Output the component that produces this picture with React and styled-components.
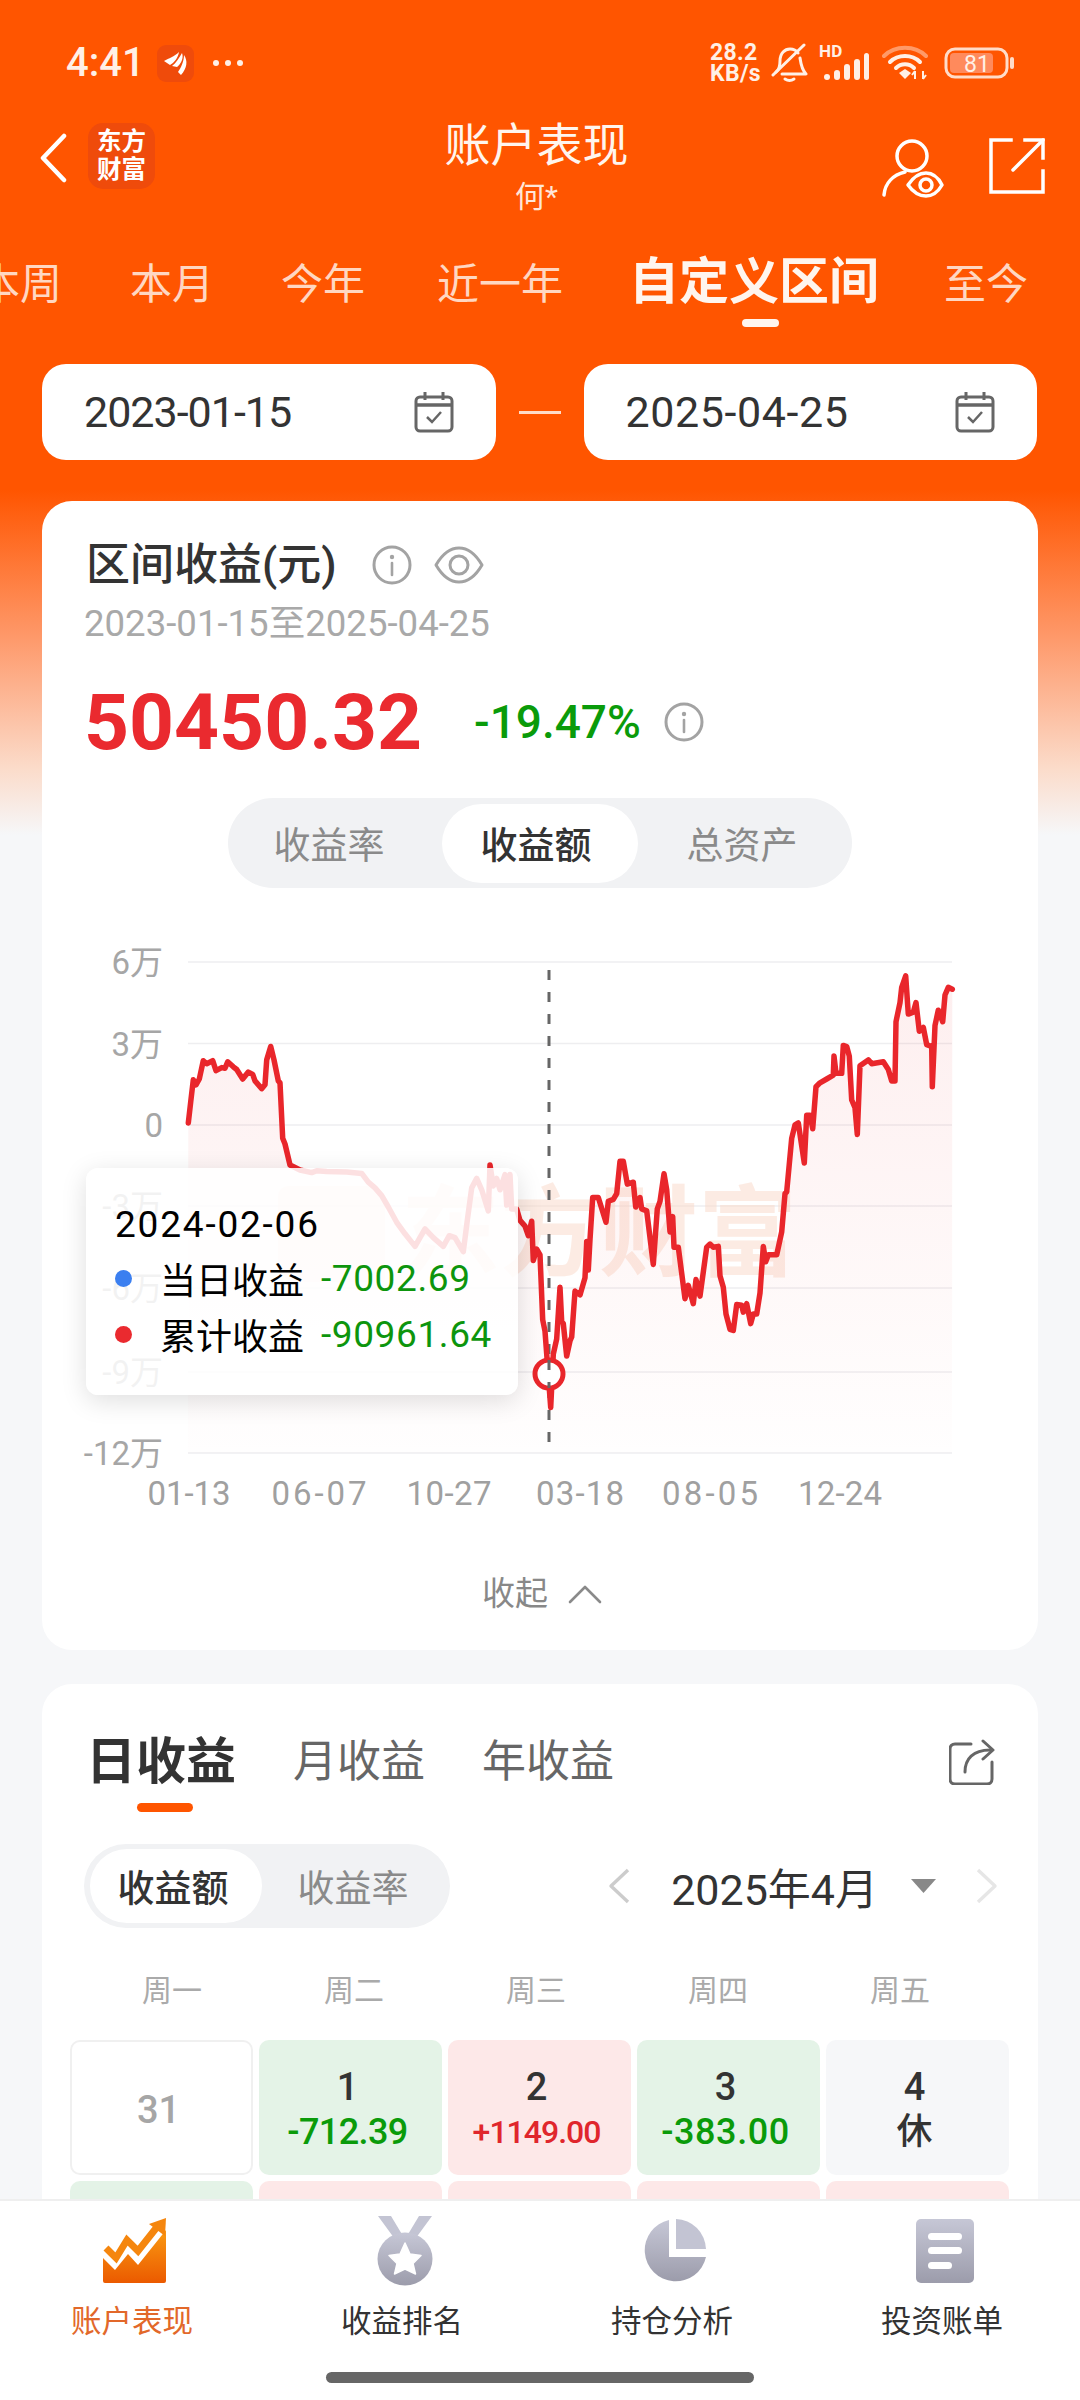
import React from 'react';
import styled, { createGlobalStyle } from 'styled-components';

const FONT = `Roboto, "Noto Sans CJK SC", sans-serif`;
const Global = createGlobalStyle`
  html, body { margin: 0; padding: 0; background: #f6f7f9; }
  body { font-family: ${FONT}; }
  * { box-sizing: border-box; }
`;

const Page = styled.div`
  width: 1080px; height: 2400px; overflow: hidden; display: flex; flex-direction: column;
  background: linear-gradient(180deg, #ff5500 0, #ff5500 490px, #fe9a6c 640px, #fbdccb 770px, #f6f7f9 835px, #f6f7f9 100%);
`;
const Scroll = styled.main`flex: 1; min-height: 0; overflow: hidden;`;

const StatusBar = styled.div`
  height: 110px; padding: 44px 65px 0 66px; display: flex; justify-content: space-between; align-items: flex-start; color: #fff0e6;
`;
const StatusLeft = styled.div`display: flex; align-items: center; height: 38px;`;
const Time = styled.span`font-size: 40px; font-weight: 500; line-height: 38px; width: 91px;`;
const StatusRight = styled.div`display: flex; align-items: center; height: 38px;`;
const Speed = styled.div`
  font-size: 23px; font-weight: 700; line-height: 21px; width: 61px; text-align: left; letter-spacing: .3px;
`;
const Hd = styled.div`position: relative; width: 50px; height: 38px; margin: 0 13px 0 11px;`;
const HdText = styled.span`
  position: absolute; left: 0; top: -2px; font-size: 17px; font-weight: 700; line-height: 18px; letter-spacing: .3px;
`;

const Nav = styled.div`
  display: grid; grid-template-columns: 405px 183px 1fr; padding-left: 40px; height: 104px; color: #fff;
`;
const NavLeft = styled.div`display: flex; align-items: flex-start; padding-top: 23px; gap: 21px;`;
const LogoBadge = styled.div`
  width: 67px; height: 66px; border-radius: 15px; background: #ef4b0b; color: #fff;
  display: flex; flex-direction: column; align-items: center; justify-content: center;
  font-size: 24.5px; font-weight: 700; line-height: 28px; margin-top: -10px;
`;
const NavCenter = styled.div`display: flex; flex-direction: column; align-items: center;`;
const Title = styled.div`font-size: 46px; line-height: 70px; white-space: nowrap; color: #fff5ee;`;
const SubTitle = styled.div`font-size: 30px; line-height: 34px; color: #ffe6d8;`;
const NavRight = styled.div`display: flex; justify-content: flex-end; gap: 45px; padding: 28px 35px 0 0;`;

const Tabs = styled.div`
  display: flex; align-items: baseline; gap: 70px; margin: 38px 0 0 -22px; height: 60px; white-space: nowrap;
`;
const Tab = styled.div`
  position: relative; flex: none; line-height: 60px; font-size: ${p => (p.$active ? 50 : 42)}px;
  font-weight: ${p => (p.$active ? 700 : 400)}; color: ${p => (p.$active ? '#fff5ee' : '#ffd7c2')};
  margin-left: ${p => p.$ml || 0}px; margin-right: ${p => p.$mr || 0}px;
  ${p => p.$active && `
    &::after { content: ''; position: absolute; left: 113px; top: 67px; width: 37px; height: 8px; border-radius: 4px; background: #fff5ee; }
  `}
`;

const DateRow = styled.div`display: flex; align-items: center; padding: 52px 43px 0 42px;`;
const DateBox = styled.div`
  flex: 1; height: 96px; background: #fff; border-radius: 24px; padding: 0 42px; display: flex; align-items: center; justify-content: space-between;
  color: #333; font-size: 43px; letter-spacing: ${p => p.$ls}px;
`;
const DateDash = styled.div`width: 42px; height: 3px; margin: 0 23px; background: #ffdcc9;`;

const Card = styled.section`
  background: #fff; margin: ${p => p.$top}px 42px 0; border-radius: 30px;
`;
const SummaryCard = styled(Card)`height: 1149px; padding: 40px 44px 0; position: relative;`;
const SummaryHead = styled.div`display: flex; align-items: center; height: 48px;`;
const SummaryTitle = styled.h2`margin: 0 35px 0 0; font-size: 44px; font-weight: 500; color: #333; line-height: 48px; white-space: nowrap;`;
const RangeText = styled.div`margin: 12px 0 0 -2px; font-size: 36.6px; line-height: 46px; color: #a9a9a9; white-space: nowrap;`;
const AmountRow = styled.div`display: flex; align-items: center; height: 90px; margin-top: 30px;`;
const Amount = styled.div`font-size: 78.5px; font-weight: 700; color: #ea2a2f; width: 390px; margin-left: -2px;`;
const Percent = styled.div`font-size: 46px; font-weight: 500; color: #0a9b0a; width: 190px;`;
const SegWrap = styled.div`display: flex; justify-content: center; margin-top: 31px;`;
const Seg = styled.div`
  display: flex; align-items: center; height: ${p => p.$h}px; padding: 0 6px; border-radius: ${p => p.$h / 2}px; background: #f1f2f4;
`;
const SegItem = styled.div`
  width: ${p => p.$w}px; height: ${p => p.$h}px; border-radius: ${p => p.$h / 2}px; display: flex; align-items: center; justify-content: center;
  padding-right: ${p => p.$pr || 0}px;
  font-size: 37px; font-weight: ${p => (p.$active ? 500 : 400)};
  color: ${p => (p.$active ? '#333' : '#8a8a8a')}; background: ${p => (p.$active ? '#fff' : 'transparent')};
`;

const ChartBox = styled.div`position: relative; width: 996px; height: 600px; margin: 42px 0 0 -44px;`;
const ChartSvg = styled.svg`display: block;`;
const Tooltip = styled.div`
  position: absolute; left: 44px; top: 238px; width: 432px; height: 227px; padding: 34px 0 0 29px; border-radius: 12px;
  background: rgba(255,255,255,.86); box-shadow: 0 6px 26px rgba(0,0,0,.13); color: #000;
`;
const TipDate = styled.div`font-size: 37px; line-height: 46px; letter-spacing: 1.8px;`;
const TipRow = styled.div`display: flex; align-items: center; height: 56px; margin-top: ${p => p.$mt}px; white-space: nowrap;`;
const TipDot = styled.span`width: 17px; height: 17px; border-radius: 50%; background: ${p => p.$c}; margin-right: 28px;`;
const TipLabel = styled.span`font-size: 36px; width: 161px;`;
const TipValue = styled.span`font-size: 37px; color: #0d950d; letter-spacing: .6px;`;
const Collapse = styled.div`
  display: flex; align-items: center; justify-content: center; gap: 20px; margin: 35px 0 0; padding-left: 4px; font-size: 33px; color: #888; line-height: 58px;
`;

const TabsRow = styled.div`display: flex; align-items: center; height: 70px; padding: 43px 43px 0 44px; box-sizing: content-box;`;
const PTab = styled.div`
  position: relative; font-size: ${p => (p.$active ? 50 : 44)}px; font-weight: ${p => (p.$active ? 700 : 400)};
  color: ${p => (p.$active ? '#333' : '#666')}; margin-right: ${p => p.$mr}px; white-space: nowrap; line-height: 70px;
  ${p => p.$active && `&::after { content: ''; position: absolute; left: 51px; top: 76px; width: 56px; height: 9px; border-radius: 5px; background: #ff5500; }`}
`;
const Spacer = styled.div`flex: 1;`;
const DayControls = styled.div`display: flex; align-items: center; justify-content: space-between; padding: 0 40px 0 42px; margin-top: 47px;`;
const MonthPick = styled.div`display: flex; align-items: center;`;
const MonthText = styled.div`font-size: 43px; color: #333; margin: 0 33px 0 41px; white-space: nowrap;`;
const MonthGap = styled.span`width: 40px;`;
const Week = styled.div`display: grid; grid-template-columns: repeat(5, 182px); margin: 41px 0 0 39px;`;
const WeekDay = styled.div`text-align: center; font-size: 30px; line-height: 44px; color: #aaa;`;
const DayGrid = styled.div`display: grid; grid-template-columns: repeat(5, 183px); gap: 6px; margin: 27px 0 0 28px;`;
const Day = styled.div`
  height: 135px; border-radius: 10px; display: flex; flex-direction: column; align-items: center; justify-content: center;
  padding: 4px 6px 0 0;
  background: ${p => p.$bg}; ${p => p.$outline && 'border: 2px solid #f0f0f0;'}
`;
const DayNum = styled.div`font-size: 38px; line-height: 44px; color: ${p => p.$c || '#333'}; font-weight: 500;`;
const DayVal = styled.div`font-size: ${p => p.$s}px; letter-spacing: ${p => p.$ls}px; line-height: 46px; font-weight: 500; color: ${p => p.$c};`;

const BottomNav = styled.nav`
  flex: none; height: 201px; background: #fff; border-top: 2px solid #efefef; position: relative;
  display: grid; grid-template-columns: repeat(4, 270px);
`;
const NavItem = styled.div`display: flex; flex-direction: column; align-items: center; padding-top: 14px;`;
const NavIcon = styled.div`height: 72px; display: flex; align-items: center; justify-content: center;`;
const NavLabel = styled.div`
  margin: 13px 6px 0 0; font-size: 30.5px; line-height: 44px; color: ${p => (p.$active ? '#e2682a' : '#333')}; white-space: nowrap;
`;
const HomeBar = styled.div`
  position: absolute; left: 326px; top: 171px; width: 428px; height: 11px; border-radius: 6px; background: #666;
`;

const stroke = { fill: 'none', strokeLinecap: 'round', strokeLinejoin: 'round' };

const AppIcon = () => (
  <svg width="37" height="37" viewBox="0 0 37 37" style={{ marginRight: 18 }}>
    <rect width="37" height="37" rx="9" fill="#ef4b0b" />
    <path d="M7 16 C12 13 17 12 22 7 C21 13 17 18 13 20 Z" fill="#fff" />
    <path d="M15 21 C19 18 22 13 25 8 C27 13 24 19 20 22 Z" fill="#fff" />
    <path d="M21 27 C24 23 27 16 27 10 C31 16 30 23 24 30 Z" fill="#fff" />
  </svg>
);
const Dots = () => (
  <svg width="32" height="8" viewBox="0 0 32 8"><g fill="#fff0e6"><circle cx="4" cy="4" r="3" /><circle cx="16" cy="4" r="3" /><circle cx="28" cy="4" r="3" /></g></svg>
);
const BellOff = () => (
  <svg width="37" height="40" viewBox="0 0 37 40">
    <g {...stroke} stroke="#fff0e6" strokeWidth="3">
      <path d="M5 29 C8 27 9 24 9 18 C9 10 14 6 19 6 C22 6 25 7 27 10" />
      <path d="M29 15 C30 22 31 27 35 31 L11 31" />
      <path d="M2 32 L33 2" />
      <path d="M14 36 C17 38 20 38 23 36" />
    </g>
  </svg>
);
const Signal = () => (
  <svg width="50" height="30" viewBox="0 0 50 30" style={{ position: 'absolute', left: 3, top: 8 }}>
    <g fill="#fff0e6">
      <rect x="2" y="22" width="6" height="6" rx="3" />
      <rect x="12" y="18" width="6" height="10" rx="3" />
      <rect x="22" y="12" width="6" height="16" rx="3" />
      <rect x="32" y="7" width="6" height="21" rx="3" />
      <rect x="42" y="1" width="5" height="27" rx="2.5" />
    </g>
  </svg>
);
const Wifi = () => (
  <svg width="46" height="36" viewBox="0 0 46 36">
    <g {...stroke} stroke="#fff0e6" strokeWidth="4">
      <path d="M2 11 C13 0 33 0 44 11" opacity=".45" />
      <path d="M8 17 C16 9 30 9 38 17" />
      <path d="M14 23 C19 18 27 18 32 23" />
    </g>
    <path d="M17 28 L23 24 L29 28 L23 34 Z" fill="#fff0e6" />
    <path d="M33 26 V34 M41 26 V34 M33 26 L30 30 M41 34 L44 30" stroke="#fff0e6" strokeWidth="2" fill="none" />
  </svg>
);
const Battery = () => (
  <svg width="71" height="32" viewBox="0 0 71 32" style={{ marginLeft: 16 }}>
    <rect x="2" y="2" width="61" height="28" rx="9" fill="none" stroke="#ffdcc8" strokeWidth="3" />
    <rect x="6" y="6" width="43" height="20" rx="4" fill="#ff8a5c" />
    <rect x="66" y="10" width="4" height="12" rx="2" fill="#ffdcc8" />
    <text x="33" y="25" textAnchor="middle" fontSize="23" fontFamily="Roboto, sans-serif" fill="#fff0e6">81</text>
  </svg>
);
const Back = () => (
  <svg width="27" height="50" viewBox="0 0 27 50"><path d="M24 3 L3 25 L24 47" {...stroke} stroke="#fff" strokeWidth="4.5" /></svg>
);
const UserEye = () => (
  <svg width="62" height="60" viewBox="0 0 62 60">
    <g {...stroke} stroke="#fff" strokeWidth="3.5">
      <circle cx="30" cy="18" r="15" />
      <path d="M2 57 C3 45 11 37 23 34" />
      <path d="M26 47 C32 38 38 35 44 35 C50 35 56 39 60 47 C56 54 50 58 44 58 C38 58 31 54 26 47 Z" />
      <circle cx="44" cy="47" r="6" />
    </g>
  </svg>
);
const ShareBox = () => (
  <svg width="56" height="56" viewBox="0 0 56 56">
    <g {...stroke} stroke="#fff" strokeWidth="3.5" strokeLinecap="square" strokeLinejoin="miter">
      <path d="M22 2 H2 V54 H54 V33" />
      <path d="M24 32 L54 2" strokeLinecap="round" />
      <path d="M36 2 H54 V20" />
    </g>
  </svg>
);
const CalIcon = () => (
  <svg width="40" height="42" viewBox="0 0 40 42">
    <g fill="none" stroke="#666" strokeWidth="3">
      <rect x="2" y="6" width="36" height="34" rx="4" />
      <path d="M2 14 H38" strokeWidth="3.5" />
      <path d="M11 1 V9 M29 1 V9" />
      <path d="M13 26 L18 31 L27 21" strokeWidth="2.5" />
    </g>
  </svg>
);
const Info = () => (
  <svg width="40" height="40" viewBox="0 0 40 40">
    <circle cx="20" cy="20" r="18" fill="none" stroke="#a3a3a3" strokeWidth="3" />
    <circle cx="20" cy="12" r="2.2" fill="#a3a3a3" />
    <path d="M20 18 V30" stroke="#a3a3a3" strokeWidth="2.6" strokeLinecap="round" />
  </svg>
);
const Eye = () => (
  <svg width="50" height="38" viewBox="0 0 50 38" style={{ marginLeft: 22 }}>
    <g {...stroke} stroke="#a3a3a3" strokeWidth="3">
      <path d="M2 19 C9 7 17 2 25 2 C33 2 41 7 48 19 C41 31 33 36 25 36 C17 36 9 31 2 19 Z" />
      <circle cx="25" cy="19" r="9" />
    </g>
  </svg>
);
const ChevUp = () => (
  <svg width="34" height="20" viewBox="0 0 34 20"><path d="M2 18 L17 3 L32 18" {...stroke} stroke="#8a8a8a" strokeWidth="2.6" /></svg>
);
const CardShare = () => (
  <svg width="46" height="46" viewBox="0 0 46 46">
    <g {...stroke} stroke="#666" strokeWidth="3">
      <path d="M22 5 H6 C3 5 1 7 1 10 V40 C1 43 3 45 6 45 H38 C41 45 43 43 43 40 V23" />
      <path d="M16 33 C16 20 24 11 41 11" />
      <path d="M34 2 L44 11 L34 20" />
    </g>
  </svg>
);
const Caret = ({ dir, c }) => (
  <svg width="22" height="36" viewBox="0 0 22 36">
    <path d={dir === 'l' ? 'M20 2 L3 18 L20 34' : 'M2 2 L19 18 L2 34'} {...stroke} stroke={c} strokeWidth="3.4" strokeLinecap="butt" />
  </svg>
);
const TriDown = () => (
  <svg width="25" height="14" viewBox="0 0 25 14"><path d="M0 0 H25 L12.5 14 Z" fill="#888" /></svg>
);

const Grad = ({ id, a, b }) => (
  <linearGradient id={id} x1="0" y1="0" x2="0" y2="1"><stop offset="0" stopColor={a} /><stop offset="1" stopColor={b} /></linearGradient>
);
const TrendIcon = () => (
  <svg width="64" height="66" viewBox="0 0 64 66">
    <defs><Grad id="tr" a="#fa9a12" b="#eb5a00" /></defs>
    <path d="M0 40 L12 52 L25 36 L35 47 L63 12 V63 Q63 65 61 65 H2 Q0 65 0 63 Z" fill="url(#tr)" />
    <path d="M3 30 L13 40 L24 22 L35 33 L54 9" fill="none" stroke="#f5860e" strokeWidth="7" />
    <path d="M46 6 L63 0 L62 18 Z" fill="#f5860e" />
  </svg>
);
const MedalIcon = () => (
  <svg width="56" height="70" viewBox="0 0 56 70">
    <defs><Grad id="md" a="#c6c7d6" b="#9c9cab" /></defs>
    <path d="M1 0 H14 L26 20 L20 26 Z M55 0 H42 L30 20 L36 26 Z" fill="#c3c4d3" />
    <ellipse cx="28" cy="43" rx="27.5" ry="26.5" fill="url(#md)" />
    <path d="M28 27 L33 38 L44 39.5 L36 47.5 L38.5 58 L28 53 L17.5 58 L20 47.5 L12 39.5 L23 38 Z" fill="#fff" stroke="#fff" strokeWidth="1.5" strokeLinejoin="round" />
  </svg>
);
const PieIcon = () => (
  <svg width="64" height="64" viewBox="0 0 64 64">
    <defs><Grad id="pi" a="#c6c7d6" b="#9c9cab" /></defs>
    <path d="M26 1 V38 H63 A31 31 0 1 1 26 1 Z" fill="url(#pi)" />
    <path d="M33 0 A31 31 0 0 1 63 30 H33 Z" fill="#c3c4d3" />
  </svg>
);
const DocIcon = () => (
  <svg width="58" height="64" viewBox="0 0 58 64">
    <defs><Grad id="dc" a="#c6c7d6" b="#9c9cab" /></defs>
    <rect x="0" y="0" width="58" height="64" rx="5" fill="url(#dc)" />
    <rect x="12" y="14" width="34" height="7" rx="3.5" fill="#fff" />
    <rect x="12" y="28" width="34" height="7" rx="3.5" fill="#fff" />
    <rect x="12" y="43" width="24" height="7" rx="3.5" fill="#fff" />
  </svg>
);

const LEFT = [[385,505],[392,450],[400,392],[408,405],[418,390],[430,342],[440,350],[458,342],[468,368],[485,360],[495,362],[503,345],[520,358],[530,365],[548,390],[565,372],[578,378],[585,395],[605,415],[615,405],[620,340],[632,305],[642,340],[655,395],[660,400],[668,545],[675,560],[690,615],[720,628],[755,635],[770,630],[800,632],[860,633],[905,637],[925,660],[945,675],[965,695],[985,725],[1010,765],[1035,795],[1065,828],[1095,782],[1120,805],[1150,828],[1168,800],[1185,805],[1210,842],[1222,760],[1235,675],[1250,650],[1265,680],[1285,735],[1290,615],[1300,670],[1310,650],[1320,680],[1335,640],[1340,720],[1350,640],[1355,730],[1370,730]];
const RIGHT = [[0,760],[15,775],[25,800],[35,762],[40,865],[50,835],[60,850],[68,1020],[75,1050],[92,1250],[100,1110],[110,1070],[120,935],[125,1025],[130,1030],[140,1115],[150,1075],[155,1065],[165,945],[180,955],[195,910],[200,815],[205,890],[210,810],[218,700],[235,700],[258,765],[265,710],[280,705],[290,690],[300,605],[310,605],[322,665],[340,660],[347,725],[360,700],[365,730],[380,735],[400,875],[412,730],[420,710],[432,638],[440,680],[450,790],[458,750],[462,830],[475,830],[495,965],[505,930],[520,978],[528,915],[540,958],[560,830],[570,822],[580,830],[595,828],[600,905],[610,935],[618,1005],[630,1045],[640,1048],[650,980],[665,982],[670,1000],[680,978],[692,1030],[700,1005],[710,1005],[720,950],[730,828],[737,868],[745,850],[770,850],[785,790],[795,690],[800,685],[815,545],[825,510],[835,505],[853,610],[860,485],[870,485],[878,520],[888,410],[900,400],[920,390],[940,380],[942,330],[948,375],[965,375],[970,302],[980,305],[988,330],[995,445],[1005,465],[1012,535],[1020,355],[1045,340],[1055,350],[1090,345],[1105,365],[1115,395],[1125,395],[1128,240],[1140,190],[1145,150],[1157,120],[1165,220],[1180,215],[1188,190],[1198,265],[1210,255],[1220,300],[1235,305],[1237,410],[1245,250],[1255,210],[1268,240],[1275,170],[1285,150],[1297,155]];
const fy = (y) => 930 + y / 2.617;
const PTS = [
  ...LEFT.map(([x, y]) => [60 + x / 3, fy(y)]),
  ...RIGHT.map(([x, y]) => [520 + x / 3, fy(y)]),
];
const LINE = PTS.map(([x, y]) => `${x.toFixed(1)},${y.toFixed(1)}`).join(' ');
const AREA = `M188,1453 L${LINE.replace(/ /g, ' L')} L952,1453 Z`;
const GRID = [[962, '6万'], [1043.5, '3万'], [1125, '0'], [1206, '-3万'], [1288, '-6万'], [1372, '-9万'], [1453, '-12万']];
const XL = [[189, '01-13', 83], [319, '06-07', 95], [449, '10-27', 85], [580, '03-18', 88], [710, '08-05', 96], [840, '12-24', 84]];

const Chart = () => (
  <ChartSvg width="996" height="600" viewBox="42 930 996 600">
    <defs>
      <linearGradient id="ar" x1="0" y1="960" x2="0" y2="1453" gradientUnits="userSpaceOnUse">
        <stop offset="0" stopColor="#ea2a2f" stopOpacity=".08" />
        <stop offset="1" stopColor="#ea2a2f" stopOpacity=".005" />
      </linearGradient>
    </defs>
    {GRID.map(([y, t]) => (
      <g key={t}>
        <line x1="188" x2="952" y1={y} y2={y} stroke="#eeeef0" strokeWidth="1.6" />
        <text x="163" y={y + 12} textAnchor="end" fontSize="33" fill="#a6a6a6" fontFamily={FONT}>{t}</text>
      </g>
    ))}
    {XL.map(([x, t, w]) => (
      <text key={t} x={x} y="1505" textAnchor="middle" textLength={w} fontSize="33" fill="#a0a0a0" fontFamily={FONT}>{t}</text>
    ))}
    <g opacity=".5">
      <path d="M290 1186 H365 Q385 1186 385 1206 V1282 H300 Q278 1282 278 1260 V1198 Q278 1186 290 1186 Z" fill="#fde3d8" />
      <text x="401" y="1268" fontSize="99" fontWeight="700" fill="#fbd9c8" fontFamily={FONT}>东方财富</text>
    </g>
    <path d={AREA} fill="url(#ar)" />
    <line x1="549" x2="549" y1="970" y2="1453" stroke="#666" strokeWidth="3" strokeDasharray="10 12" />
    <polyline points={LINE} fill="none" stroke="#e9262b" strokeWidth="5.5" strokeLinejoin="round" strokeLinecap="round" />
    <circle cx="549" cy="1374" r="14" fill="#fff" stroke="#e9262b" strokeWidth="5" />
    <line x1="549" x2="549" y1="1360" y2="1388" stroke="#666" strokeWidth="3" strokeDasharray="10 12" />
  </ChartSvg>
);

const DAYS = [
  { n: '31', out: true },
  { n: '1', v: '-712.39', c: '#0a9b0a', bg: '#e4f3e7', s: 36, ls: -0.6 },
  { n: '2', v: '+1149.00', c: '#e0262c', bg: '#fde8e8', s: 32, ls: -1 },
  { n: '3', v: '-383.00', c: '#0a9b0a', bg: '#e4f3e7', s: 36, ls: 0.6 },
  { n: '4', v: '休', c: '#333', bg: '#f6f7f9', s: 36, ls: 0 },
];

export default function App() {
  return (
    <Page>
      <Global />
      <Scroll>
        <StatusBar>
          <StatusLeft><Time>4:41</Time><AppIcon /><Dots /></StatusLeft>
          <StatusRight>
            <Speed>28.2<br />KB/s</Speed>
            <BellOff />
            <Hd><HdText>HD</HdText><Signal /></Hd>
            <Wifi />
            <Battery />
          </StatusRight>
        </StatusBar>
        <Nav>
          <NavLeft><Back /><LogoBadge><span>东方</span><span>财富</span></LogoBadge></NavLeft>
          <NavCenter><Title>账户表现</Title><SubTitle>何*</SubTitle></NavCenter>
          <NavRight><UserEye /><ShareBox /></NavRight>
        </Nav>
        <Tabs>
          <Tab>本周</Tab>
          <Tab $ml={-2}>本月</Tab>
          <Tab $ml={-3}>今年</Tab>
          <Tab $ml={2}>近一年</Tab>
          <Tab $active $ml={-4} $mr={-5}>自定义区间</Tab>
          <Tab>至今</Tab>
        </Tabs>
        <DateRow>
          <DateBox $ls={-1}>2023-01-15<CalIcon /></DateBox>
          <DateDash />
          <DateBox $ls={0.6}>2025-04-25<CalIcon /></DateBox>
        </DateRow>

        <SummaryCard $top={41}>
          <SummaryHead>
            <SummaryTitle>区间收益(元)</SummaryTitle>
            <Info /><Eye />
          </SummaryHead>
          <RangeText>2023-01-15至2025-04-25</RangeText>
          <AmountRow>
            <Amount>50450.32</Amount>
            <Percent>-19.47%</Percent>
            <Info />
          </AmountRow>
          <SegWrap>
            <Seg $h={90}>
              <SegItem $w={208} $h={79} $pr={18}>收益率</SegItem>
              <SegItem $w={196} $h={79} $pr={8} $active>收益额</SegItem>
              <SegItem $w={208} $h={79}>总资产</SegItem>
            </Seg>
          </SegWrap>
          <ChartBox>
            <Chart />
            <Tooltip>
              <TipDate>2024-02-06</TipDate>
              <TipRow $mt={2}><TipDot $c="#3b7ff0" /><TipLabel>当日收益</TipLabel><TipValue>-7002.69</TipValue></TipRow>
              <TipRow $mt={0}><TipDot $c="#ea2a2f" /><TipLabel>累计收益</TipLabel><TipValue>-90961.64</TipValue></TipRow>
            </Tooltip>
          </ChartBox>
          <Collapse>收起<ChevUp /></Collapse>
        </SummaryCard>

        <Card $top={34}>
          <TabsRow>
            <PTab $active $mr={57}>日收益</PTab>
            <PTab $mr={57}>月收益</PTab>
            <PTab $mr={0}>年收益</PTab>
            <Spacer />
            <CardShare />
          </TabsRow>
          <DayControls>
            <Seg $h={84}>
              <SegItem $w={172} $h={74} $pr={6} $active>收益额</SegItem>
              <SegItem $w={182} $h={74}>收益率</SegItem>
            </Seg>
            <MonthPick>
              <Caret dir="l" c="#cccccc" />
              <MonthText>2025年4月</MonthText>
              <TriDown />
              <MonthGap />
              <Caret dir="r" c="#e6e6e6" />
            </MonthPick>
          </DayControls>
          <Week>{['周一', '周二', '周三', '周四', '周五'].map(d => <WeekDay key={d}>{d}</WeekDay>)}</Week>
          <DayGrid>
            {DAYS.map(d => (
              <Day key={d.n} $bg={d.bg || '#fff'} $outline={d.out}>
                <DayNum $c={d.out ? '#a6a6a6' : undefined}>{d.n}</DayNum>
                {d.v && <DayVal $c={d.c} $s={d.s} $ls={d.ls}>{d.v}</DayVal>}
              </Day>
            ))}
            {['#e4f3e7', '#fde8e8', '#fde8e8', '#fde8e8', '#fde8e8'].map((bg, i) => <Day key={i} $bg={bg} />)}
          </DayGrid>
        </Card>
      </Scroll>
      <BottomNav>
        <NavItem><NavIcon><TrendIcon /></NavIcon><NavLabel $active>账户表现</NavLabel></NavItem>
        <NavItem><NavIcon><MedalIcon /></NavIcon><NavLabel>收益排名</NavLabel></NavItem>
        <NavItem><NavIcon><PieIcon /></NavIcon><NavLabel>持仓分析</NavLabel></NavItem>
        <NavItem><NavIcon><DocIcon /></NavIcon><NavLabel>投资账单</NavLabel></NavItem>
        <HomeBar />
      </BottomNav>
    </Page>
  );
}
